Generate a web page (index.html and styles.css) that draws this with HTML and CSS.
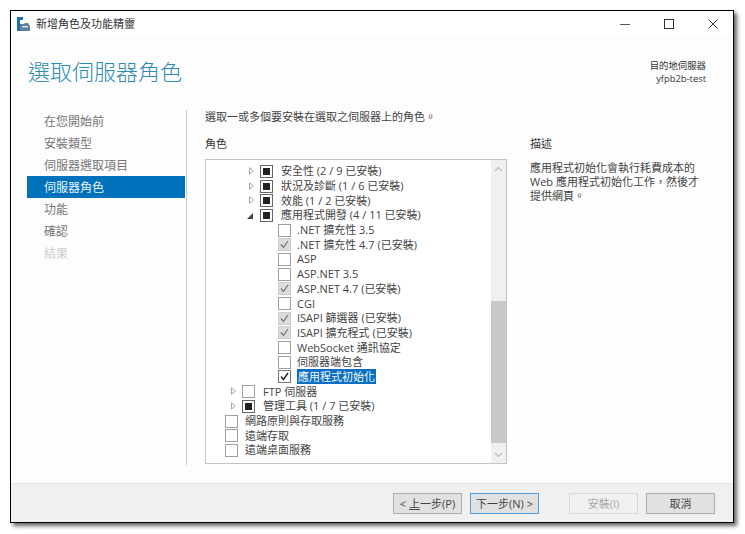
FILE: index.html
```html
<!DOCTYPE html>
<html lang="zh-Hant">
<head>
<meta charset="utf-8">
<title>新增角色及功能精靈</title>
<link rel="stylesheet" href="styles.css">
</head>
<body>
<div class="window">
  <div class="titlebar">
    <svg class="appicon" width="14" height="14" viewBox="0 0 14 14"><rect x="0" y="0" width="6" height="3" fill="#1a6fb5"/><rect x="0" y="3" width="3" height="11" fill="#1a6fb5"/><path d="M3 7h4l1-1h3l2 3v5H3z" fill="#5f8298"/><rect x="5" y="9" width="6" height="1.5" fill="#d5e0e8"/></svg>
    <span class="wintitle">新增角色及功能精靈</span>
    <div class="winbtns">
      <svg width="12" height="12" viewBox="0 0 12 12"><path d="M1 6.5h10" stroke="#555" stroke-width="1"/></svg>
      <svg width="12" height="12" viewBox="0 0 12 12"><rect x="1.5" y="1.5" width="9" height="9" fill="none" stroke="#333"/></svg>
      <svg width="12" height="12" viewBox="0 0 12 12"><path d="M1.5 1.5l9 9M10.5 1.5l-9 9" stroke="#333" stroke-width="1"/></svg>
    </div>
  </div>
  <div class="header">
    <h1>選取伺服器角色</h1>
    <div class="target">目的地伺服器<br>yfpb2b-test</div>
  </div>
  <div class="main">
    <nav class="sidebar">
      <div class="navitem">在您開始前</div>
      <div class="navitem">安裝類型</div>
      <div class="navitem">伺服器選取項目</div>
      <div class="navitem active">伺服器角色</div>
      <div class="navitem">功能</div>
      <div class="navitem">確認</div>
      <div class="navitem disabled">結果</div>
    </nav>
    <div class="content">
      <p class="intro">選取一或多個要安裝在選取之伺服器上的角色。</p>
      <div class="columns">
        <div class="rolecol">
          <div class="label">角色</div>
          <div class="tree">
            <div class="rows">
              <div class="row l3"><span class="arrow closed"></span><span class="cb mixed"></span><span class="txt">安全性 (2 / 9 已安裝)</span></div>
              <div class="row l3"><span class="arrow closed"></span><span class="cb mixed"></span><span class="txt">狀況及診斷 (1 / 6 已安裝)</span></div>
              <div class="row l3"><span class="arrow closed"></span><span class="cb mixed"></span><span class="txt">效能 (1 / 2 已安裝)</span></div>
              <div class="row l3"><span class="arrow open"></span><span class="cb mixed"></span><span class="txt">應用程式開發 (4 / 11 已安裝)</span></div>
              <div class="row l4"><span class="cb"></span><span class="txt">.NET 擴充性 3.5</span></div>
              <div class="row l4"><span class="cb installed"><svg viewBox="0 0 11 11"><path d="M2 5.5l2.5 3L9 2" fill="none" stroke="#777" stroke-width="1.3"/></svg></span><span class="txt">.NET 擴充性 4.7 (已安裝)</span></div>
              <div class="row l4"><span class="cb"></span><span class="txt">ASP</span></div>
              <div class="row l4"><span class="cb"></span><span class="txt">ASP.NET 3.5</span></div>
              <div class="row l4"><span class="cb installed"><svg viewBox="0 0 11 11"><path d="M2 5.5l2.5 3L9 2" fill="none" stroke="#777" stroke-width="1.3"/></svg></span><span class="txt">ASP.NET 4.7 (已安裝)</span></div>
              <div class="row l4"><span class="cb"></span><span class="txt">CGI</span></div>
              <div class="row l4"><span class="cb installed"><svg viewBox="0 0 11 11"><path d="M2 5.5l2.5 3L9 2" fill="none" stroke="#777" stroke-width="1.3"/></svg></span><span class="txt">ISAPI 篩選器 (已安裝)</span></div>
              <div class="row l4"><span class="cb installed"><svg viewBox="0 0 11 11"><path d="M2 5.5l2.5 3L9 2" fill="none" stroke="#777" stroke-width="1.3"/></svg></span><span class="txt">ISAPI 擴充程式 (已安裝)</span></div>
              <div class="row l4"><span class="cb"></span><span class="txt">WebSocket 通訊協定</span></div>
              <div class="row l4"><span class="cb"></span><span class="txt">伺服器端包含</span></div>
              <div class="row l4"><span class="cb checked"><svg viewBox="0 0 11 11"><path d="M2 5.5l2.5 3L9 2" fill="none" stroke="#222" stroke-width="1.4"/></svg></span><span class="txt selected">應用程式初始化</span></div>
              <div class="row l2"><span class="arrow closed"></span><span class="cb"></span><span class="txt">FTP 伺服器</span></div>
              <div class="row l2"><span class="arrow closed"></span><span class="cb mixed"></span><span class="txt">管理工具 (1 / 7 已安裝)</span></div>
              <div class="row l1"><span class="cb"></span><span class="txt">網路原則與存取服務</span></div>
              <div class="row l1"><span class="cb"></span><span class="txt">遠端存取</span></div>
              <div class="row l1"><span class="cb"></span><span class="txt">遠端桌面服務</span></div>
            </div>
            <div class="scrollbar">
              <svg class="sbarrow" width="15" height="17" viewBox="0 0 15 17"><path d="M4 11l3.5-3.5L11 11" fill="none" stroke="#bbb" stroke-width="1.2"/></svg>
              <div class="sbtrack"><div class="sbthumb"></div></div>
              <svg class="sbarrow" width="15" height="17" viewBox="0 0 15 17"><path d="M4 7l3.5 3.5L11 7" fill="none" stroke="#bbb" stroke-width="1.2"/></svg>
            </div>
          </div>
        </div>
        <div class="desccol">
          <div class="label">描述</div>
          <p class="desc">應用程式初始化會執行耗費成本的<br>Web 應用程式初始化工作，然後才<br>提供網頁。</p>
        </div>
      </div>
    </div>
  </div>
  <div class="footer">
    <button class="btn"><span>&lt; <u>上</u>一步(P)</span></button>
    <button class="btn default">下一步(N) &gt;</button>
    <button class="btn off sep" disabled>安裝(I)</button>
    <button class="btn">取消</button>
  </div>
</div>
</body>
</html>
```

FILE: styles.css
```css
* { box-sizing: border-box; }
html, body { margin: 0; padding: 0; background: #fff; }
body {
  width: 745px;
  height: 534px;
  padding: 10px 0 0 10px;
  font-family: "Open Sans", "Noto Sans CJK TC", sans-serif;
  font-size: 11px;
  color: #444;
  overflow: hidden;
}
.window {
  width: 724px;
  height: 513px;
  border: 1px solid #000;
  background: #fdfdfd;
  box-shadow: 3px 3px 4px #666;
  display: flex;
  flex-direction: column;
}
.titlebar {
  height: 25px;
  flex: none;
  display: flex;
  align-items: center;
  padding-left: 6px;
  background: #fff;
}
.wintitle { margin-left: 5px; color: #333; line-height: 25px; }
.winbtns {
  margin-left: auto;
  margin-right: 14px;
  display: flex;
  gap: 32px;
}
.header {
  height: 74px;
  flex: none;
  display: flex;
  justify-content: space-between;
  padding: 20px 27px 0 17px;
}
h1 {
  margin: 0;
  font-size: 22px;
  font-weight: 300;
  line-height: 30px;
  color: #2a8cb4;
}
.target {
  text-align: right;
  font-size: 9.4px;
  line-height: 13px;
  padding-top: 3px;
  color: #333;
}
.main {
  flex: 1;
  display: flex;
  min-height: 0;
}
.sidebar {
  width: 176px;
  height: 355px;
  flex: none;
  padding-left: 16px;
  border-right: 1px solid #c8c8c8;
}
.navitem {
  width: 158px;
  height: 22px;
  line-height: 20px;
  padding: 2px 0 0 17px;
  font-size: 12px;
  color: #777;
}
.navitem.active { background: #0072bb; color: #e8f3fa; }
.navitem.disabled { color: #ccc; }
.content { flex: 1; padding-left: 18px; }
.intro { margin: 0; padding-top: 1px; height: 13px; line-height: 12px; color: #444; }
.columns { display: flex; margin-top: 13px; }
.rolecol { width: 302px; flex: none; }
.label { height: 16px; line-height: 16px; color: #333; }
.tree {
  margin-top: 7px;
  width: 302px;
  height: 305px;
  border: 1px solid #c4c4c4;
  background: #fff;
  display: flex;
}
.rows { flex: 1; padding-top: 4px; min-width: 0; }
.row {
  height: 14.7px;
  display: flex;
  align-items: center;
  line-height: 14px;
  white-space: nowrap;
  color: #444;
}
.l1 { padding-left: 19px; }
.l2 { padding-left: 18px; }
.l3 { padding-left: 36px; }
.l4 { padding-left: 72px; }
.arrow { width: 18px; height: 13px; flex: none; position: relative; }
.arrow::before {
  content: "";
  position: absolute;
  width: 0;
  height: 0;
}
.arrow.closed::before {
  left: 7px;
  top: 2px;
  border-left: 5px solid #a6a6a6;
  border-top: 4px solid transparent;
  border-bottom: 4px solid transparent;
}
.arrow.closed::after {
  content: "";
  position: absolute;
  left: 8px;
  top: 4px;
  width: 0;
  height: 0;
  border-left: 3px solid #fff;
  border-top: 2px solid transparent;
  border-bottom: 2px solid transparent;
}
.arrow.open::before {
  left: 5px;
  top: 4px;
  border-right: 6px solid #444;
  border-top: 6px solid transparent;
}
.cb {
  width: 13px;
  height: 13px;
  flex: none;
  border: 1px solid #a0a0a0;
  background: #fff;
  margin-right: 8px;
  display: block;
  position: relative;
}
.l1 .cb { margin-right: 7px; }
.l4 .cb { margin-right: 6px; }
.cb svg { display: block; width: 11px; height: 11px; }
.cb.mixed { border-color: #666; }
.cb.mixed::before {
  content: "";
  position: absolute;
  left: 2px;
  top: 2px;
  width: 7px;
  height: 7px;
  background: #222;
}
.cb.installed { background: #dcdcdc; border-color: #ccc; }
.cb.checked { border-color: #777; }
.txt.selected {
  background: #0a6fc2;
  color: #f4f8fb;
  padding: 0 1px;
  height: 15px;
  line-height: 15px;
}
.scrollbar {
  width: 15px;
  flex: none;
  background: #f0f0f0;
  display: flex;
  flex-direction: column;
}
.sbarrow { display: block; flex: none; }
.sbtrack { flex: 1; padding-top: 124px; }
.sbthumb { height: 142px; background: #c8c8c8; }
.desccol { margin-left: 23px; flex: 1; }
.desc { margin: 9px 0 0; line-height: 14px; color: #444; }
.footer {
  height: 39px;
  flex: none;
  background: #f0f0f0;
  border-top: 1px solid #e3e3e3;
  display: flex;
  align-items: flex-start;
  padding: 9px 0 0 382px;
  gap: 8px;
}
.btn {
  width: 69px;
  height: 21px;
  padding: 0;
  font: 11px/19px "Open Sans", "Noto Sans CJK TC", sans-serif;
  color: #444;
  background: #e1e1e1;
  border: 1px solid #adadad;
}
.btn.default { border-color: #4c9ee0; }
.btn.off { background: #f0f0f0; border-color: #d9d9d9; color: #a8a8a8; }
.btn.sep { margin-left: 22px; }
```
